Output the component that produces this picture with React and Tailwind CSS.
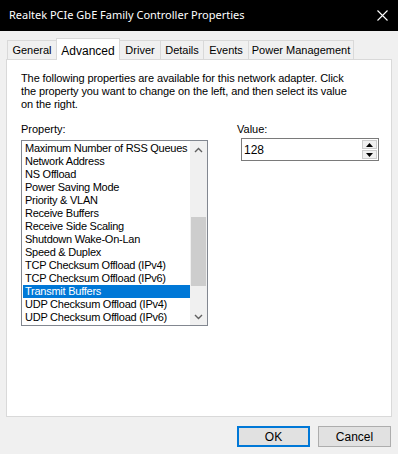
import React from "react";

const items = [
  "Maximum Number of RSS Queues",
  "Network Address",
  "NS Offload",
  "Power Saving Mode",
  "Priority & VLAN",
  "Receive Buffers",
  "Receive Side Scaling",
  "Shutdown Wake-On-Lan",
  "Speed & Duplex",
  "TCP Checksum Offload (IPv4)",
  "TCP Checksum Offload (IPv6)",
  "Transmit Buffers",
  "UDP Checksum Offload (IPv4)",
  "UDP Checksum Offload (IPv6)",
];

const tabs = [
  { label: "General", w: "w-[50px]" },
  { label: "Advanced", w: "w-[64px]", active: true },
  { label: "Driver", w: "w-[42px]" },
  { label: "Details", w: "w-[44px]" },
  { label: "Events", w: "w-[46px]" },
  { label: "Power Management", w: "w-[106px]" },
];

const Chevron = ({ down }) => (
  <svg width="9" height="6" viewBox="0 0 9 6" className="block">
    <path
      d={down ? "M1 1 L4.5 4.5 L8 1" : "M1 5 L4.5 1.5 L8 5"}
      fill="none"
      stroke="#606060"
      strokeWidth="1.4"
    />
  </svg>
);

const Tri = ({ down }) => (
  <svg width="7" height="4" viewBox="0 0 7 4" className="block">
    <path d={down ? "M0 0 H7 L3.5 4 Z" : "M0 4 H7 L3.5 0 Z"} fill="#000" />
  </svg>
);

export default function App() {
  return (
    <div
      className="w-[398px] h-[454px] bg-[#f0f0f0] text-[11px] text-black overflow-hidden"
      style={{ fontFamily: '"Liberation Sans", Arial, sans-serif' }}
    >
      {/* Title bar */}
      <div
        className="h-[31px] bg-black text-white flex items-center justify-between pl-[9px] pr-[10px] text-[11px]"
        style={{ fontFamily: '"Noto Sans", "Open Sans", sans-serif' }}
      >
        <span>Realtek PCIe GbE Family Controller Properties</span>
        <svg width="11" height="11" viewBox="0 0 11 11">
          <path d="M0.5 0.5 L10.5 10.5 M10.5 0.5 L0.5 10.5" stroke="#fff" strokeWidth="1.1" />
        </svg>
      </div>

      {/* Tabs */}
      <div className="flex items-end pl-[7px] pt-[7px]">
        {tabs.map((t, i) => (
          <div
            key={t.label}
            className={
              "flex justify-center border-t border-l border-r border-[#d9d9d9] " +
              t.w +
              (i > 0 ? " -ml-px" : "") +
              (t.active
                ? " h-[22px] -mb-px bg-white relative z-10 items-start pt-[3px] text-[12px]"
                : " h-[19px] bg-[#f0f0f0] items-center pt-[1px]")
            }
          >
            {t.label}
          </div>
        ))}
      </div>

      {/* Panel */}
      <div className="ml-[6px] w-[386px] h-[358px] border border-[#d9d9d9] bg-white pl-[14px] pt-[12px]">
        <p className="leading-[13px] tracking-[-0.1px]">
          The following properties are available for this network adapter. Click
          <br />
          the property you want to change on the left, and then select its value
          <br />
          on the right.
        </p>

        <div className="flex mt-[12px]">
          <div className="w-[187px]">
            <div className="leading-[13px] mb-[4px]">Property:</div>
            <div className="h-[186px] border border-[#828790] flex">
              <div className="flex-1 pl-px pt-px">
                {items.map((it) => (
                  <div
                    key={it}
                    className={
                      "h-[13px] leading-[13px] pl-[2px] whitespace-nowrap overflow-hidden tracking-[-0.25px] " +
                      (it === "Transmit Buffers" ? "bg-[#0078d7] text-white" : "")
                    }
                  >
                    {it}
                  </div>
                ))}
              </div>
              <div className="w-[17px] bg-[#f0f0f0] flex flex-col items-center">
                <div className="h-[17px] flex items-center justify-center">
                  <Chevron />
                </div>
                <div className="flex-1 w-full px-px pt-[59px] pb-[22px] flex flex-col">
                  <div className="h-[69px] w-full bg-[#cdcdcd]" />
                </div>
                <div className="h-[17px] flex items-center justify-center">
                  <Chevron down />
                </div>
              </div>
            </div>
          </div>

          <div className="ml-[29px]">
            <div className="leading-[13px] mb-[2px]">Value:</div>
            <div className="ml-[4px] w-[138px] h-[23px] border border-[#7a7a7a] flex items-center justify-between pl-[2px] pr-px">
              <span className="text-[12px]">128</span>
              <div className="flex flex-col gap-px">
                <div className="w-[15px] h-[9px] bg-[#f0f0f0] border border-[#cccccc] flex items-center justify-center">
                  <Tri />
                </div>
                <div className="w-[15px] h-[9px] bg-[#f0f0f0] border border-[#cccccc] flex items-center justify-center">
                  <Tri down />
                </div>
              </div>
            </div>
          </div>
        </div>
      </div>

      {/* Buttons */}
      <div className="flex justify-end gap-[8px] pr-[7px] pt-[9px]">
        <button className="w-[73px] h-[21px] bg-[#e1e1e1] border-2 border-[#0078d7] text-[12px]">
          OK
        </button>
        <button className="w-[73px] h-[21px] bg-[#e1e1e1] border border-[#adadad] text-[12px]">
          Cancel
        </button>
      </div>
    </div>
  );
}
